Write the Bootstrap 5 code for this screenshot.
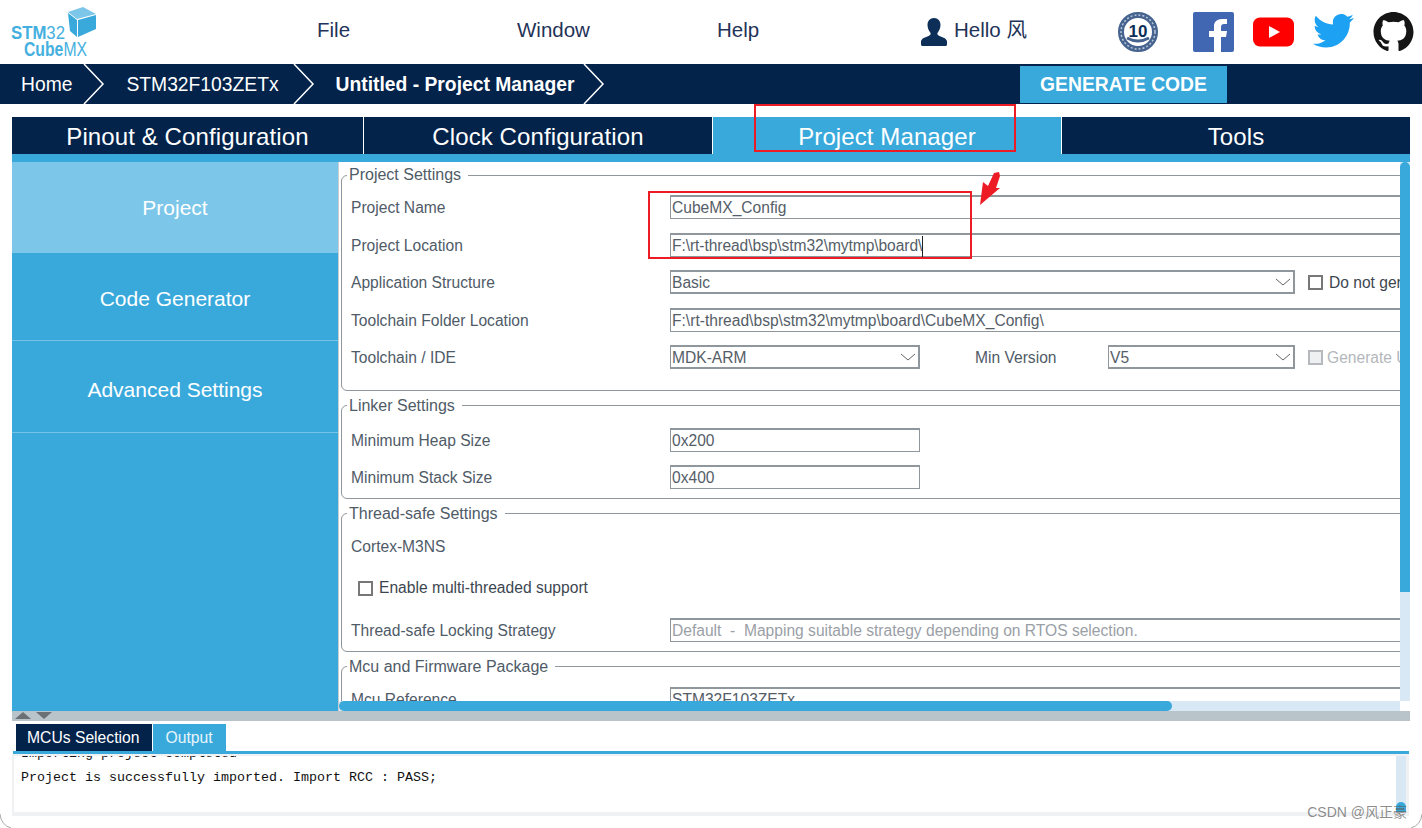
<!DOCTYPE html>
<html lang="en">

<head>
    <meta charset="UTF-8">
    <meta name="viewport" content="width=device-width, initial-scale=1.0">
    <title>STM32CubeMX Untitled - Project Manager</title>
    <link href="https://cdn.jsdelivr.net/npm/bootstrap@5.3.0/dist/css/bootstrap.min.css" rel="stylesheet">
    <style>
        html, body { height: 828px; overflow: hidden; }
        body { font-family: "Liberation Sans", "Noto Sans CJK SC", sans-serif; background: #fff; color: #4f5b67; font-size: 15.6px; }
        .app-root { position: relative; height: 828px; overflow: hidden; }

        .top-head { height: 64px; color: #1f3358; font-size: 20.5px; }
        .logo-box { width: 317px; padding-left: 10px; }
        .menu-item { width: 200px; padding-bottom: 3px; }
        .hello-box { width: 198px; margin-left: 3px; gap: 2px; padding-bottom: 3px; }
        .hello-icon { margin-top: 3px; }
        .social-box { gap: 19px; }
        .badge-gap { margin-right: 16px; }

        .crumb-bar { height: 40px; background: #03234b; color: #fff; font-size: 19.3px; }
        .crumb-text { white-space: nowrap; padding-top: 2px; }
        .crumb-home { margin-left: 21px; margin-right: 11px; }
        .crumb-mid { margin-left: 21px; margin-right: 14px; }
        .crumb-last { margin-left: 21px; margin-right: 8px; font-weight: 700; }
        .gen-btn { position: absolute; left: 1020px; top: 66px; width: 207px; height: 37px; background: #39a9dc; border: 0; border-radius: 0; color: #fff; font-size: 19.3px; font-weight: 700; padding: 1px 0 0; }

        .main-wrap { margin: 13px 12px 0; height: 604px; }
        .tab-row { height: 37px; gap: 1px; }
        .tab-cell { flex: 1 1 0; background: #03234b; color: #fff; font-size: 24px; line-height: 40px; text-align: center; letter-spacing: .1px; white-space: nowrap; }
        .tab-cell.on { background: #39a9dc; }
        .tab-first { flex: 0 0 351px; }
        .tab-strip { height: 8px; background: #39a9dc; }

        .work-area { height: 549px; }
        .side-col { width: 326px; background: #39a9dc; border-radius: 0; }
        .side-col .list-group-item { background: #39a9dc; color: #fff; border: 0; border-bottom: 1px solid #74c2e6; border-radius: 0; font-size: 21px; text-align: center; padding: 0; display: flex; align-items: center; justify-content: center; }
        .side-col .list-group-item.active { background: #7cc6e9; border-bottom: 0; height: 91px; padding-top: 1px; }
        .side-mid { height: 88px; padding-top: 4px !important; }
        .side-low { height: 92px; padding-top: 6px !important; }

        .right-col { width: 1072px; border-left: 1px solid #c9ced3; }
        .view-row { height: 539px; }
        .scroll-view { width: 1061px; overflow: hidden; }
        .form-sheet { width: 1250px; padding-left: 2px; }
        .vbar { width: 10px; background: #d8e8f5; }
        .vbar-thumb { height: 430px; background: #39a9dc; border-radius: 5px 5px 0 0; }
        .hbar-row { height: 10px; }
        .hbar { width: 1061px; background: #d8e8f5; }
        .hbar-thumb { width: 833px; height: 10px; background: #39a9dc; border-radius: 5px; }

        .set-box { border: 1px solid #8f969c; border-radius: 6px; padding: 0 0 0 9px; margin-bottom: 5px; }
        .set-box legend { float: none; width: auto; font-size: 16px; line-height: 20px; margin: 0 0 0 -4px; padding: 0 7px 0 2px; color: #4f5b67; }
        .box-a { padding-top: 3.5px; padding-bottom: 13.5px; margin-top: 3px; }
        .box-b { padding-top: 6px; padding-bottom: 2px; }
        .box-b .field-row { height: 37px; }
        .box-c { padding-bottom: 0; }
        .box-d { padding-top: 4px; }
        .field-row { height: 37.5px; white-space: nowrap; }
        .field-label { width: 319px; flex: none; padding-top: 1px; }
        .tall-a { height: 43px; padding-top: 3px; }
        .tall-b { height: 43px; padding-left: 7px; }
        .tall-c { height: 41px; }

        .form-control.flat-in, .form-select.flat-in { border: 1px solid #8f969c; border-top-width: 2px; border-radius: 0; height: 24px; min-height: 0; padding: 1px 0 0 1px; font-size: 15.6px; line-height: 20px; color: #555e68; background-color: #fff; box-shadow: none; flex: none; }
        .form-select.flat-in { border-width: 2px 2px 2px 1px; background-size: 18px 12px; background-position: right 1px center; background-image: url("data:image/svg+xml,%3csvg xmlns='http://www.w3.org/2000/svg' viewBox='0 0 18 12'%3e%3cpath fill='none' stroke='%23666' d='M2 3l7 6 7-6'/%3e%3c/svg%3e"); }
        .w-full { width: 760px; }
        .w-wide { width: 625px; }
        .w-mid { width: 250px; }
        .w-end { width: 187px; }
        .dim-in { color: #9aa0a6 !important; }
        .loc-text { letter-spacing: -.08px; white-space: nowrap; }
        .type-caret { display: inline-block; width: 1px; height: 21px; background: #222; vertical-align: top; }
        .min-label { width: 133px; margin-left: 55px; flex: none; padding-top: 1px; }
        .form-check-input.flat-check[type=checkbox] { width: 15px; height: 15px; margin: 0; border: 2px solid #777; border-radius: 0; flex: none; }
        .form-check-input.flat-check[type=checkbox]:disabled { opacity: 1; background-color: #eef0f2; border-color: #b5b9bd; }
        .form-check-input.flat-check.chk-a[type=checkbox] { margin-left: 13px; margin-right: 6px; }
        .form-check-input.flat-check.chk-a[type=checkbox]:disabled { margin-right: 4px; }
        .form-check-input.flat-check.chk-b[type=checkbox] { margin-right: 6px; }
        .text-dim { color: #b3b7bb; }
        .text-dark-2 { color: #3d4650; }

        .split-bar { height: 10px; background: #b8c4ca; padding-left: 3px; gap: 5px; }
        .tri-up { width: 0; height: 0; border-left: 8px solid transparent; border-right: 8px solid transparent; border-bottom: 7px solid #6b7075; margin-top: 1px; }
        .tri-down { width: 0; height: 0; border-left: 8px solid transparent; border-right: 8px solid transparent; border-top: 7px solid #6b7075; margin-top: 1px; }

        .lower-wrap { margin: 3px 13px 0 13px; }
        .out-tabs { height: 27px; padding-left: 3px; gap: 1px; }
        .out-tab { background: #03234b; color: #fff; font-size: 15.7px; line-height: 27px; padding: 0 13px 0 11px; }
        .out-tab.on { background: #39a9dc; color: #e8f5fb; padding-left: 12px; }
        .out-line { height: 3px; background: #39a9dc; }
        .out-frame { height: 62px; background: #f0f1f3; padding: 2px 3px 4px 2px; margin-left: -1px; }
        .out-text { background: #fff; overflow: hidden; font-family: "Liberation Mono", monospace; font-size: 13.33px; line-height: 24px; color: #111; padding-left: 7px; }
        .out-scroll { width: 10px; background: #d8e8f5; position: relative; }
        .out-thumb { position: absolute; left: 0; bottom: 0; width: 10px; height: 10px; border-radius: 5px 5px 0 0; background: #39a9dc; }
        .out-lines { margin-top: -14px; white-space: pre; }

        .mark-box { position: absolute; border: 2px solid #ed1c24; pointer-events: none; }
        .mark-tab { left: 754px; top: 104px; width: 262px; height: 48px; }
        .mark-fields { left: 648px; top: 191px; width: 324px; height: 68px; }
        .mark-arrow { position: absolute; left: 975px; top: 168px; }
        .water { position: absolute; right: 15px; top: 803px; font-size: 14px; color: rgba(90, 90, 90, .7); line-height: 18px; white-space: nowrap; }
        .win-corner { position: absolute; top: 812px; }
        .corner-l { left: 0; }
        .corner-r { right: 0; }
    </style>
</head>

<body>
    <div class="app-root">
        <header class="top-head d-flex align-items-center">
            <div class="logo-box">
                <svg width="92" height="60" viewBox="0 0 92 60">
                    <text x="1" y="37" font-family="Liberation Sans" font-size="19" font-weight="700" fill="#45b0e0" textLength="54" lengthAdjust="spacingAndGlyphs">STM<tspan font-weight="400">32</tspan></text>
                    <text x="14" y="54" font-family="Liberation Sans" font-size="20" font-weight="700" fill="#45b0e0" textLength="63" lengthAdjust="spacingAndGlyphs">Cube<tspan font-weight="400">MX</tspan></text>
                    <path d="M58 10l15-5 13 7-19 5z" fill="#7cc6e9"/>
                    <path d="M58 11l9 7v17l-7-6z" fill="#39a9dc"/>
                    <path d="M68 18l18-5v14l-18 8z" fill="#39a9dc"/>
                </svg>
            </div>
            <div class="menu-item">File</div>
            <div class="menu-item">Window</div>
            <div class="menu-item">Help</div>
            <div class="hello-box d-flex align-items-center">
                <svg class="hello-icon" width="28" height="30" viewBox="0 0 28 30">
                    <path d="M14 1c4 0 6.500 3 6.500 7 0 3-1.500 6-3 8-.5 1 0 2 2 3 3 1.500 7 2 7.500 5.500v3c0 1-1 1.500-2 1.500H3c-1 0-2-.5-2-1.500v-3c.5-3.500 4.500-4 7.500-5.500 2-1 2.500-2 2-3-1.500-2-3-5-3-8 0-4 2.500-7 6.500-7z" fill="#0d2f57"/>
                </svg>
                <span class="ms-1">Hello 风</span>
            </div>
            <div class="social-box d-flex align-items-center">
                <svg class="badge-gap" width="40" height="40" viewBox="0 0 40 40">
                    <circle cx="20" cy="20" r="17" fill="#fff" stroke="#46648f" stroke-width="6"/>
                    <circle cx="20" cy="20" r="17" fill="none" stroke="#b9c6d8" stroke-width="1.500" stroke-dasharray="2 2"/>
                    <text x="20" y="25" text-anchor="middle" font-family="Liberation Sans" font-size="17" font-weight="700" fill="#0d2f57">10</text>
                    <path d="M9 26q11 6 22 0" fill="none" stroke="#46648f" stroke-width="3"/>
                </svg>
                <svg width="41" height="40" viewBox="0 0 41 40">
                    <rect width="41" height="40" rx="2" fill="#4267b2"/>
                    <path d="M28 40V25h5l1-6h-6v-4c0-2 1-3 3-3h3V7h-5c-5 0-8 3-8 7v5h-5v6h5v15z" fill="#fff"/>
                </svg>
                <svg width="41" height="30" viewBox="0 0 41 30">
                    <rect width="41" height="29" y=".5" rx="7" fill="#f00"/>
                    <path d="M16 9l11 6-11 6z" fill="#fff"/>
                </svg>
                <svg width="41" height="36" viewBox="0 0 24 21" preserveAspectRatio="none">
                    <path transform="translate(0 -2.200)" d="M23.953 4.57a10 10 0 01-2.825.775 4.958 4.958 0 002.163-2.723c-.951.555-2.005.959-3.127 1.184a4.920 4.920 0 00-8.384 4.482C7.690 8.095 4.067 6.130 1.640 3.162a4.822 4.822 0 00-.666 2.475c0 1.710.870 3.213 2.188 4.096a4.904 4.904 0 01-2.228-.616v.060a4.923 4.923 0 003.946 4.827 4.996 4.996 0 01-2.212.085 4.936 4.936 0 004.604 3.417 9.867 9.867 0 01-6.102 2.105c-.390 0-.779-.023-1.170-.067a13.995 13.995 0 007.557 2.209c9.053 0 13.998-7.496 13.998-13.985 0-.210 0-.420-.015-.630A9.935 9.935 0 0024 4.590z" fill="#1da1f2"/>
                </svg>
                <svg width="41" height="40" viewBox="0 0 16 16">
                    <path d="M8 0C3.580 0 0 3.580 0 8c0 3.540 2.290 6.530 5.470 7.590.4.070.550-.170.550-.380 0-.190-.010-.820-.010-1.490-2.010.370-2.530-.490-2.690-.940-.090-.230-.480-.940-.820-1.130-.280-.150-.680-.520-.010-.530.630-.010 1.080.580 1.230.820.720 1.210 1.870.870 2.330.660.070-.520.280-.870.510-1.070-1.780-.2-3.640-.890-3.640-3.950 0-.870.310-1.590.820-2.150-.080-.2-.360-1.020.080-2.120 0 0 .670-.210 2.200.820.640-.180 1.320-.270 2-.270.680 0 1.360.090 2 .270 1.530-1.040 2.200-.820 2.200-.820.440 1.100.160 1.920.080 2.120.510.560.820 1.270.820 2.150 0 3.070-1.870 3.750-3.650 3.950.290.250.540.730.540 1.480 0 1.070-.010 1.930-.010 2.200 0 .210.150.460.550.380A8.013 8.013 0 0016 8c0-4.420-3.580-8-8-8z" fill="#151515"/>
                </svg>
            </div>
        </header>

        <div class="crumb-bar d-flex align-items-center">
            <span class="crumb-text crumb-home">Home</span>
            <svg width="22" height="40" viewBox="0 0 22 40"><path d="M1 0l19 20L1 40" fill="none" stroke="#fff" stroke-width="1.500"/></svg>
            <span class="crumb-text crumb-mid">STM32F103ZETx</span>
            <svg width="22" height="40" viewBox="0 0 22 40"><path d="M1 0l19 20L1 40" fill="none" stroke="#fff" stroke-width="1.500"/></svg>
            <span class="crumb-text crumb-last">Untitled - Project Manager</span>
            <svg width="22" height="40" viewBox="0 0 22 40"><path d="M1 0l19 20L1 40" fill="none" stroke="#fff" stroke-width="1.500"/></svg>
        </div>
        <button class="btn gen-btn" type="button">GENERATE CODE</button>

        <div class="main-wrap">
            <div class="tab-row d-flex">
                <div class="tab-cell tab-first">Pinout &amp; Configuration</div>
                <div class="tab-cell">Clock Configuration</div>
                <div class="tab-cell on">Project Manager</div>
                <div class="tab-cell">Tools</div>
            </div>
            <div class="tab-strip"></div>
            <div class="work-area d-flex">
                <div class="side-col list-group">
                    <div class="list-group-item active">Project</div>
                    <div class="list-group-item side-mid">Code Generator</div>
                    <div class="list-group-item side-low">Advanced Settings</div>
                </div>
                <div class="right-col d-flex flex-column">
                    <div class="view-row d-flex">
                        <div class="scroll-view">
                            <div class="form-sheet">
                                <fieldset class="set-box box-a">
                                    <legend>Project Settings</legend>
                                    <div class="field-row d-flex align-items-center">
                                        <span class="field-label">Project Name</span>
                                        <input class="form-control flat-in w-full" type="text" value="CubeMX_Config">
                                    </div>
                                    <div class="field-row d-flex align-items-center">
                                        <span class="field-label">Project Location</span>
                                        <div class="form-control flat-in w-full loc-text">F:\rt-thread\bsp\stm32\mytmp\board\<span class="type-caret"></span></div>
                                    </div>
                                    <div class="field-row d-flex align-items-center">
                                        <span class="field-label">Application Structure</span>
                                        <select class="form-select flat-in w-wide"><option>Basic</option></select>
                                        <input class="form-check-input flat-check chk-a" type="checkbox">
                                        <span class="text-dark-2">Do not generate the main()</span>
                                    </div>
                                    <div class="field-row d-flex align-items-center">
                                        <span class="field-label">Toolchain Folder Location</span>
                                        <input class="form-control flat-in w-full" type="text" value="F:\rt-thread\bsp\stm32\mytmp\board\CubeMX_Config\">
                                    </div>
                                    <div class="field-row d-flex align-items-center">
                                        <span class="field-label">Toolchain / IDE</span>
                                        <select class="form-select flat-in w-mid"><option>MDK-ARM</option></select>
                                        <span class="min-label">Min Version</span>
                                        <select class="form-select flat-in w-end"><option>V5</option></select>
                                        <input class="form-check-input flat-check chk-a" type="checkbox" disabled>
                                        <span class="text-dim">Generate Under Root</span>
                                    </div>
                                </fieldset>

                                <fieldset class="set-box box-b">
                                    <legend>Linker Settings</legend>
                                    <div class="field-row d-flex align-items-center">
                                        <span class="field-label">Minimum Heap Size</span>
                                        <input class="form-control flat-in w-mid" type="text" value="0x200">
                                    </div>
                                    <div class="field-row d-flex align-items-center">
                                        <span class="field-label">Minimum Stack Size</span>
                                        <input class="form-control flat-in w-mid" type="text" value="0x400">
                                    </div>
                                </fieldset>

                                <fieldset class="set-box box-c">
                                    <legend>Thread-safe Settings</legend>
                                    <div class="tall-a d-flex align-items-center">Cortex-M3NS</div>
                                    <div class="tall-b d-flex align-items-center">
                                        <input class="form-check-input flat-check chk-b" type="checkbox">
                                        <span class="text-dark-2">Enable multi-threaded support</span>
                                    </div>
                                    <div class="tall-c d-flex align-items-center">
                                        <span class="field-label">Thread-safe Locking Strategy</span>
                                        <input class="form-control flat-in w-full dim-in" type="text" value="Default &nbsp;- &nbsp;Mapping suitable strategy depending on RTOS selection.">
                                    </div>
                                </fieldset>

                                <fieldset class="set-box box-d">
                                    <legend>Mcu and Firmware Package</legend>
                                    <div class="field-row d-flex align-items-center">
                                        <span class="field-label">Mcu Reference</span>
                                        <input class="form-control flat-in w-full" type="text" value="STM32F103ZETx">
                                    </div>
                                </fieldset>
                            </div>
                        </div>
                        <div class="vbar"><div class="vbar-thumb"></div></div>
                    </div>
                    <div class="hbar-row">
                        <div class="hbar"><div class="hbar-thumb"></div></div>
                    </div>
                </div>
            </div>
            <div class="split-bar d-flex">
                <div class="tri-up"></div>
                <div class="tri-down"></div>
            </div>
        </div>

        <div class="lower-wrap">
            <div class="out-tabs d-flex">
                <div class="out-tab">MCUs Selection</div>
                <div class="out-tab on">Output</div>
            </div>
            <div class="out-line"></div>
            <div class="out-frame d-flex">
                <div class="out-text flex-grow-1">
                    <div class="out-lines">Importing project completed
Project is successfully imported. Import RCC : PASS;</div>
                </div>
                <div class="out-scroll"><div class="out-thumb"></div></div>
            </div>
        </div>

        <div class="mark-box mark-tab"></div>
        <div class="mark-box mark-fields"></div>
        <svg class="mark-arrow" width="30" height="40" viewBox="0 0 30 40">
            <path d="M5 37l3-23 5 4 6-13 5-1 1 4-4 12 4 0z" fill="#ed1c24"/>
        </svg>
        <div class="water">CSDN @风正豪</div>
        <svg class="win-corner corner-l" width="12" height="16" viewBox="0 0 12 16"><path d="M0 2q1 11 11 14" fill="none" stroke="#aaa"/></svg>
        <svg class="win-corner corner-r" width="12" height="16" viewBox="0 0 12 16"><path d="M12 2q-1 11-11 14" fill="none" stroke="#aaa"/></svg>
    </div>
    <script src="https://cdn.jsdelivr.net/npm/bootstrap@5.3.0/dist/js/bootstrap.bundle.min.js"></script>
</body>

</html>
